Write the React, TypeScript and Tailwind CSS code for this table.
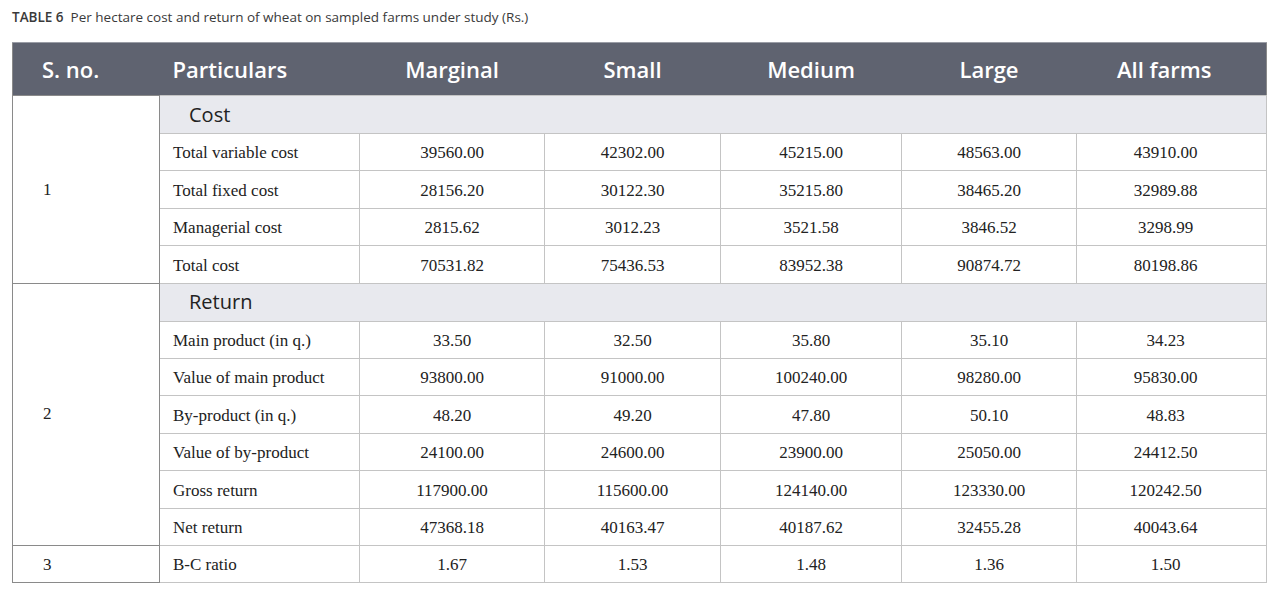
import React from "react";

type Row = { label: string; v: string[] };

const costRows: Row[] = [
  { label: "Total variable cost", v: ["39560.00", "42302.00", "45215.00", "48563.00", "43910.00"] },
  { label: "Total fixed cost", v: ["28156.20", "30122.30", "35215.80", "38465.20", "32989.88"] },
  { label: "Managerial cost", v: ["2815.62", "3012.23", "3521.58", "3846.52", "3298.99"] },
  { label: "Total cost", v: ["70531.82", "75436.53", "83952.38", "90874.72", "80198.86"] },
];

const returnRows: Row[] = [
  { label: "Main product (in q.)", v: ["33.50", "32.50", "35.80", "35.10", "34.23"] },
  { label: "Value of main product", v: ["93800.00", "91000.00", "100240.00", "98280.00", "95830.00"] },
  { label: "By-product (in q.)", v: ["48.20", "49.20", "47.80", "50.10", "48.83"] },
  { label: "Value of by-product", v: ["24100.00", "24600.00", "23900.00", "25050.00", "24412.50"] },
  { label: "Gross return", v: ["117900.00", "115600.00", "124140.00", "123330.00", "120242.50"] },
  { label: "Net return", v: ["47368.18", "40163.47", "40187.62", "32455.28", "40043.64"] },
];

const bc: Row = { label: "B-C ratio", v: ["1.67", "1.53", "1.48", "1.36", "1.50"] };

const cellBase = "border border-[#c4c4c4] text-[17px] text-[#222] font-['Liberation_Serif',serif] pt-[2px]";

function Cells({ r }: { r: Row }) {
  return (
    <>
      <td className={`${cellBase} pl-[13px] text-left`}>{r.label}</td>
      {r.v.map((x, i) => (
        <td key={i} className={`${cellBase} text-center ${i === 4 ? "pr-[12px]" : ""}`}>
          {x}
        </td>
      ))}
    </>
  );
}

function SNo({ n, span }: { n: string; span: number }) {
  return (
    <td
      rowSpan={span}
      className="border border-[#8a8a8a] pl-[30px] text-left align-middle text-[17px] text-[#222] font-['Liberation_Serif',serif]"
    >
      {n}
    </td>
  );
}

function Section({ label }: { label: string }) {
  return (
    <td
      colSpan={6}
      className="border border-[#c4c4c4] bg-[#e8e9ee] pl-[29px] text-left text-[20px] text-[#222] font-['Open_Sans',sans-serif]"
    >
      {label}
    </td>
  );
}

export default function App() {
  const heads = ["Marginal", "Small", "Medium", "Large"];
  return (
    <div className="w-[1280px] h-[601px] bg-white overflow-hidden">
      <div className="pl-[12px] pt-[7px] h-[42px] text-[13.5px] text-[#3a3a3a] font-['Open_Sans',sans-serif] leading-[20px]">
        <span className="font-semibold">TABLE 6</span>&nbsp; Per hectare cost and return of wheat on sampled farms under study (Rs.)
      </div>
      <table className="ml-[12px] w-[1254px] border-collapse table-fixed border border-[#8a8a8a]">
        <colgroup>
          <col className="w-[147px]" />
          <col className="w-[200px]" />
          <col className="w-[185px]" />
          <col className="w-[176px]" />
          <col className="w-[181px]" />
          <col className="w-[175px]" />
          <col className="w-[190px]" />
        </colgroup>
        <thead>
          <tr className="h-[53px] bg-[#5f6370] text-white font-['Open_Sans',sans-serif] text-[22px]">
            <th className="text-left pl-[29px] font-semibold border-t border-[#9a9da6]">S. no.</th>
            <th className="text-left pl-[13px] font-semibold border-t border-[#9a9da6]">Particulars</th>
            {heads.map((h) => (
              <th key={h} className="text-center font-semibold border-t border-[#9a9da6]">
                {h}
              </th>
            ))}
            <th className="text-center pr-[14px] font-semibold border-t border-[#9a9da6]">All farms</th>
          </tr>
        </thead>
        <tbody>
          <tr className="h-[38px]">
            <SNo n="1" span={5} />
            <Section label="Cost" />
          </tr>
          {costRows.map((r) => (
            <tr key={r.label} className="h-[37.4px]">
              <Cells r={r} />
            </tr>
          ))}
          <tr className="h-[38px]">
            <SNo n="2" span={7} />
            <Section label="Return" />
          </tr>
          {returnRows.map((r) => (
            <tr key={r.label} className="h-[37.4px]">
              <Cells r={r} />
            </tr>
          ))}
          <tr className="h-[37.4px]">
            <td className="border border-[#8a8a8a] pl-[30px] pt-[2px] text-left text-[17px] text-[#222] font-['Liberation_Serif',serif]">
              3
            </td>
            <Cells r={bc} />
          </tr>
        </tbody>
      </table>
    </div>
  );
}
